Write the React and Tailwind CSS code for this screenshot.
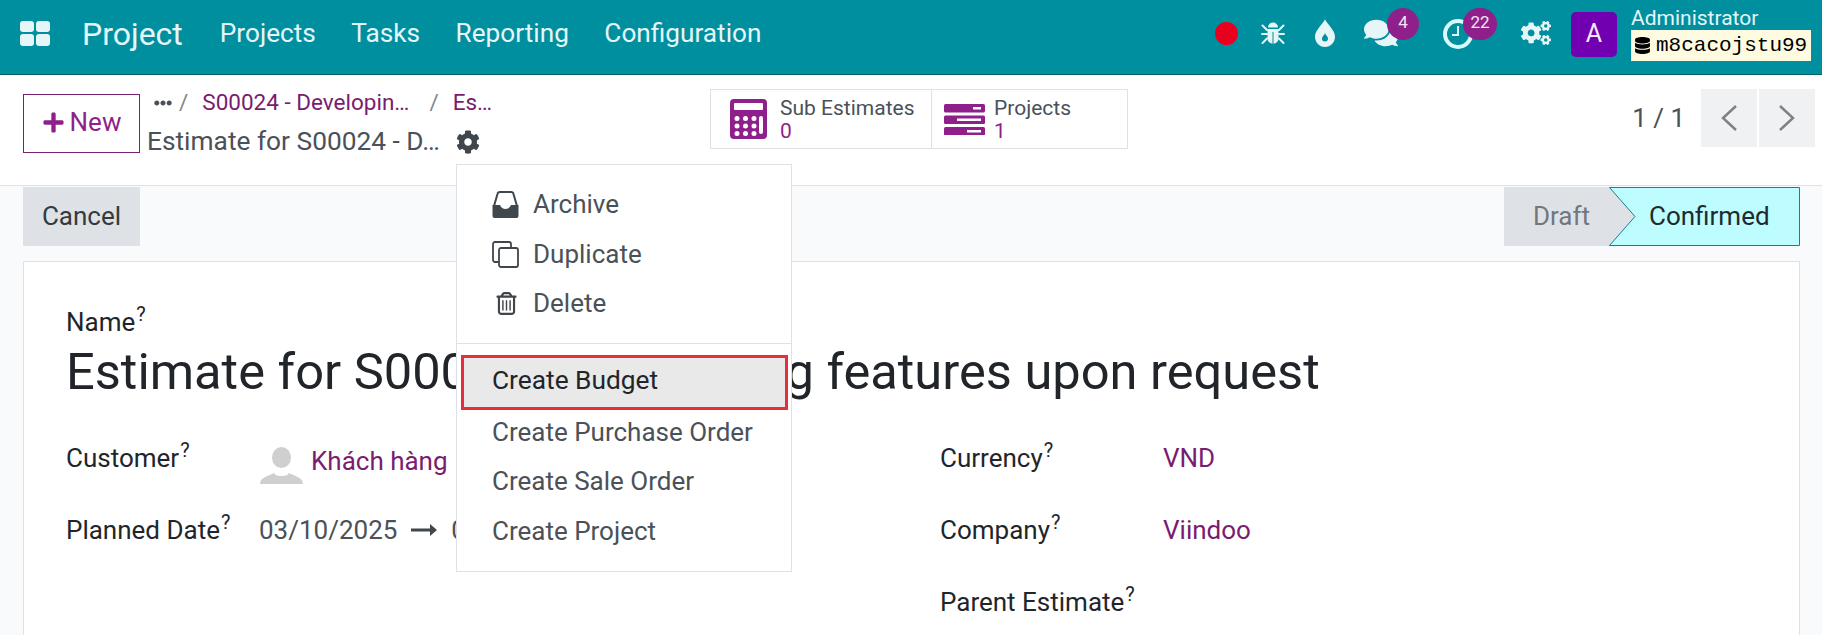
import { FaComments, FaCog, FaCogs, FaDatabase, FaPlus, FaEllipsisH } from "react-icons/fa";
import { FaRegTrashCan } from "react-icons/fa6";

const font = { fontFamily: "Roboto, sans-serif" };

function AppsIcon() {
  return (
    <svg width="31" height="25" viewBox="0 0 31 25" fill="#e6f6f8">
      <rect x="0" y="0" width="14" height="11" rx="3" />
      <rect x="16" y="0" width="14" height="11" rx="3" />
      <rect x="0" y="13" width="14" height="12" rx="3" />
      <rect x="16" y="13" width="14" height="12" rx="3" />
    </svg>
  );
}

function BugIcon() {
  return (
    <svg width="24" height="24" viewBox="0 0 24 24" fill="#e6f6f8">
      <path d="M7 6.500a5 5 0 0 1 10 0z" />
      <path d="M6.500 8h11v9.500c0 3-2.500 5-5 5.200V11h-1v11.700c-2.500-.2-5-2.200-5-5.200z" />
      <g stroke="#e6f6f8" strokeWidth="2" strokeLinecap="round">
        <path d="M1.500 4.500 6 9M22.500 4.500 18 9M1 13h5M23 13h-5M1.500 22 6 17.500M22.500 22 18 17.500" />
      </g>
    </svg>
  );
}

function DropIcon() {
  return (
    <svg width="22" height="28" viewBox="0 0 22 28">
      <path fill="#e6f6f8" d="M11 0c1 4 10 11 10 17.500C21 23.500 16.500 28 11 28S1 23.500 1 17.500C1 11 10 4 11 0z" />
      <path fill="#008f9e" d="M11 14c.5 2 3 3.500 3 5.500a3 3 0 0 1-6 0c0-2 2.500-3.500 3-5.500z" />
    </svg>
  );
}

function ClockIcon() {
  return (
    <svg width="32" height="32" viewBox="0 0 32 32" fill="none" stroke="#d9fbfd">
      <circle cx="16" cy="16" r="13" strokeWidth="4" />
      <path d="M16 8v9h-6" strokeWidth="2" />
    </svg>
  );
}

function ArchiveIcon() {
  return (
    <svg width="27" height="27" viewBox="0 0 27 27" fill="#3f464c">
      <path fill="none" stroke="#3f464c" strokeWidth="2" d="M2 15 5.500 3a2.500 2.500 0 0 1 2.400-2h11.200a2.500 2.500 0 0 1 2.400 2L25 15" />
      <path d="M0.500 14H8c1 2.500 3 4 5.500 4s4.500-1.500 5.500-4h7.500v11a2 2 0 0 1-2 2h-22a2 2 0 0 1-2-2z" />
    </svg>
  );
}

function Badge({ children, className }) {
  return (
    <span className={`absolute top-[8px] h-[32px] rounded-full bg-[#8f1f8a] text-[#f3e4f2] text-[17px] leading-[28px] text-center ${className}`}>
      {children}
    </span>
  );
}

function Navbar() {
  return (
    <div className="relative h-[75px] bg-[#008f9e] border-b border-[#04606a] flex items-center text-[#e6f6f8]">
      <div className="ml-[20px] mt-[-8px]">
        <AppsIcon />
      </div>
      <span className="ml-[31px] text-[32px] mt-[-7px]">Project</span>
      <div className="ml-[37px] flex gap-[35.500px] text-[26.200px] mt-[-6px]">
        <span>Projects</span>
        <span>Tasks</span>
        <span>Reporting</span>
        <span>Configuration</span>
      </div>
      <div className="ml-auto flex items-center h-full relative w-[607px]">
        <span className="ml-0 w-[23px] h-[23px] rounded-full bg-[#e9001e] shrink-0 mt-[-8px]" />
        <span className="ml-[23px] mt-[-8px]"><BugIcon /></span>
        <span className="ml-[29px] mt-[-8px]"><DropIcon /></span>
        <span className="ml-[28px] mt-[-8px] text-[#e6f6f8]"><FaComments size={34} /></span>
        <Badge className="left-[172px] w-[32px]">4</Badge>
        <span className="ml-[44px] mt-[-6px]"><ClockIcon /></span>
        <Badge className="left-[248px] w-[34px]">22</Badge>
        <span className="ml-[47px] mt-[-8px] text-[#e6f6f8]"><FaCogs size={30} /></span>
        <span className="ml-[20px] w-[46px] h-[45px] rounded-[5px] bg-[#7100b0] flex items-center justify-center text-[25px] text-[#f4e8fb] mt-[-6px]">A</span>
        <div className="ml-[14px] flex flex-col mt-[-7px]">
          <span className="text-[21px] leading-[24px]">Administrator</span>
          <span className="w-[180px] h-[31px] bg-[#fffbe0] text-black flex items-center pl-[3px] gap-[5px] text-[21px]" style={{ fontFamily: "'Liberation Mono', monospace" }}>
            <FaDatabase size={17} />
            m8cacojstu99
          </span>
        </div>
      </div>
    </div>
  );
}

function CalculatorIcon() {
  const dots = [];
  [0, 1, 2].forEach((r) => {
    [0, 1, 2].forEach((c) => {
      dots.push(<circle key={`${r}${c}`} cx={7 + c * 8.5} cy={19.5 + r * 7.5} r="2.500" fill="#fff" />);
    });
  });
  return (
    <svg width="37" height="40" viewBox="0 0 37 40">
      <rect width="37" height="40" rx="4" fill="#8f1f8a" />
      <rect x="4" y="4" width="29" height="7" rx="1" fill="#fff" />
      {dots}
      <rect x="29" y="17" width="4" height="18" rx="2" fill="#fff" />
    </svg>
  );
}

function ServerIcon() {
  return (
    <svg width="41" height="31" viewBox="0 0 41 31" fill="#8f1f8a">
      <rect y="0" width="41" height="8.500" rx="1.500" />
      <rect y="11.500" width="41" height="8.500" rx="1.500" />
      <rect y="23" width="41" height="8.500" rx="1.500" />
      <rect x="29" y="3" width="8" height="2.500" fill="#fff" />
      <rect x="13" y="14.500" width="24" height="2.500" fill="#fff" />
      <rect x="23" y="26" width="14" height="2.500" fill="#fff" />
    </svg>
  );
}

function ControlPanel() {
  return (
    <div className="h-[111px] bg-white border-b border-[#dee2e6] flex items-start pl-[23px] pt-[19px] pr-[7px]">
      <div className="w-[687px] shrink-0 flex">
        <button type="button" className="w-[117px] h-[59px] border border-[#7c1f74] text-[#8f1f8a] text-[26px] flex items-center justify-center gap-[5px] pb-[2px]">
          <FaPlus size={23} />
          New
        </button>
        <div className="ml-[7px] text-[#4a5158]">
          <div className="flex items-center h-[20px] text-[22.500px] mt-[-1px] ml-[7px]">
            <FaEllipsisH size={18} className="text-[#4a5158]" />
            <span className="ml-[7px] text-[#7f868c]">/</span>
            <span className="ml-[14px] text-[#7a1c70]">S00024 - Developin…</span>
            <span className="ml-[20px] text-[#7f868c]">/</span>
            <span className="ml-[14px] text-[#7a1c70]">Es…</span>
          </div>
          <div className="flex items-center mt-[15px] h-[28px] text-[26.300px]">
            <span>Estimate for S00024 - D…</span>
            <FaCog size={24} className="ml-[16px] text-[#3f464c]" />
          </div>
        </div>
      </div>
      <div className="mt-[-5px] w-[418px] h-[60px] border border-[#dee2e6] flex text-[#4a5158] text-[21px]">
        <div className="w-[221px] border-r border-[#dee2e6] flex items-center pl-[19px] gap-[13px]">
          <CalculatorIcon />
          <div className="leading-[23px] pt-[2px]">
            <div>Sub Estimates</div>
            <div className="text-[#8f1f8a]">0</div>
          </div>
        </div>
        <div className="flex items-center pl-[12px] gap-[9px]">
          <ServerIcon />
          <div className="leading-[23px] pt-[2px]">
            <div>Projects</div>
            <div className="text-[#8f1f8a]">1</div>
          </div>
        </div>
      </div>
      <div className="ml-auto mt-[-5px] flex items-center text-[#4a5158]">
        <span className="text-[26px] mr-[16px]">1 / 1</span>
        <span className="w-[56px] h-[58px] bg-[#f0f1f3] flex items-center justify-center">
          <svg width="18" height="28" viewBox="0 0 18 28" fill="none" stroke="#7d8287" strokeWidth="2.500"><path d="M16 2 3 14l13 12" /></svg>
        </span>
        <span className="ml-[2px] w-[56px] h-[58px] bg-[#f0f1f3] flex items-center justify-center">
          <svg width="18" height="28" viewBox="0 0 18 28" fill="none" stroke="#7d8287" strokeWidth="2.500"><path d="M2 2l13 12L2 26" /></svg>
        </span>
      </div>
    </div>
  );
}

function StatusRow() {
  return (
    <div className="h-[75px] pl-[23px] pr-[22px] pt-[1px] flex items-start justify-between">
      <button type="button" className="w-[117px] h-[59px] bg-[#dee2e6] text-[#343a40] text-[26px]">Cancel</button>
      <div className="flex h-[59px] text-[26px]">
        <div className="w-[131px] bg-[#dee2e6] text-[#71777d] pl-[29px] leading-[58px]">Draft</div>
        <div className="relative w-[191px] ml-[-26px] text-[#1f2a30] pl-[40px] leading-[58px]">
          <svg className="absolute inset-0" width="191" height="59" viewBox="0 0 191 59">
            <path d="M0.500 0.500H190.500V58.500H0.500L26 29.500z" fill="#bdfdff" stroke="#0f858f" />
          </svg>
          <span className="relative">Confirmed</span>
        </div>
      </div>
    </div>
  );
}

function Help() {
  return <sup className="text-[20px] ml-[1px] align-baseline">?</sup>;
}

function Field({ label, children, className }) {
  return (
    <div className={`flex items-start h-[72px] ${className}`}>
      <span className="text-[#1f262b] text-[26px] leading-[32px]">
        {label}
        <Help />
      </span>
      {children}
    </div>
  );
}

function FormCard() {
  return (
    <div className="mr-[22px] ml-[23px] h-[400px] bg-white border border-[#dee2e6] pl-[42px] pt-[43px]">
      <div className="text-[#1f262b] text-[26px] leading-[32px] mt-[1px]">
        Name
        <Help />
      </div>
      <div className="text-[#212529] text-[50.600px] leading-[68px] whitespace-nowrap">
        Estimate for S00024 - Developing features upon request
      </div>
      <div className="flex mt-[36px]">
        <div className="w-[874px]">
          <Field label="Customer">
            <span className="absolute left-[260px] flex items-center">
              <svg className="translate-y-[4px]" width="43" height="37" viewBox="0 0 43 37" fill="#cfcfcf">
                <ellipse cx="21.500" cy="10.500" rx="9.500" ry="10.500" />
                <path d="M0 37c0-7 9-8 14-11 1 2 3 3 7.500 3s6.500-1 7.500-3c5 3 14 4 14 11z" />
              </svg>
              <span className="ml-[8px] text-[26px] text-[#7a1c70]">Khách hàng</span>
            </span>
          </Field>
          <Field label="Planned Date">
            <span className="absolute left-[259px] flex items-center text-[26px] text-[#4a5158] leading-[32px]">
              03/10/2025
              <svg className="mx-[14px]" width="26" height="14" viewBox="0 0 26 14" fill="#3f464c"><path d="M0 5.500h19V1l7 6-7 6V8.500H0z" /></svg>
              03/31/2025
            </span>
          </Field>
        </div>
        <div>
          <Field label="Currency">
            <span className="absolute left-[1163px] text-[26px] text-[#7a1c70] leading-[32px]">VND</span>
          </Field>
          <Field label="Company">
            <span className="absolute left-[1163px] text-[26px] text-[#7a1c70] leading-[32px]">Viindoo</span>
          </Field>
          <Field label="Parent Estimate" />
        </div>
      </div>
    </div>
  );
}

function DropdownMenu() {
  const itemClass = "h-[49.500px] flex items-center pl-[35px] text-[26px] text-[#4a5158]";
  return (
    <div className="absolute left-[456px] top-[164px] w-[336px] h-[408px] bg-white border border-[#dee2e6] pt-[15px] z-10">
      <div className={itemClass}>
        <ArchiveIcon />
        <span className="ml-[14px]">Archive</span>
      </div>
      <div className={itemClass}>
        <svg width="27" height="27" viewBox="0 0 27 27" fill="none" stroke="#3f464c" strokeWidth="1.800">
          <rect x="7" y="7" width="19" height="19" rx="2" />
          <path d="M7 21H3a2 2 0 0 1-2-2V3a2 2 0 0 1 2-2h14a2 2 0 0 1 2 2v4" />
        </svg>
        <span className="ml-[14px]">Duplicate</span>
      </div>
      <div className={itemClass}>
        <FaRegTrashCan size={23} className="text-[#3f464c] ml-[3px]" />
        <span className="ml-[15px]">Delete</span>
      </div>
      <div className="border-t border-[#dee2e6] mt-[14px] pt-[11px]">
        <div className="ml-[4px] mr-[3px] h-[55px] border-[3px] border-[#e5303a] bg-[#e9e9e9] flex items-center pl-[28px] pb-[2px] text-[26.300px] text-[#212529]">
          Create Budget
        </div>
        <div className="mt-[-2px]">
          <div className={itemClass}>Create Purchase Order</div>
          <div className={itemClass}>Create Sale Order</div>
          <div className={itemClass}>Create Project</div>
        </div>
      </div>
    </div>
  );
}

export default function App() {
  return (
    <div className="relative h-[635px] overflow-hidden bg-[#f9fafb]" style={font}>
      <Navbar />
      <ControlPanel />
      <StatusRow />
      <FormCard />
      <DropdownMenu />
    </div>
  );
}
